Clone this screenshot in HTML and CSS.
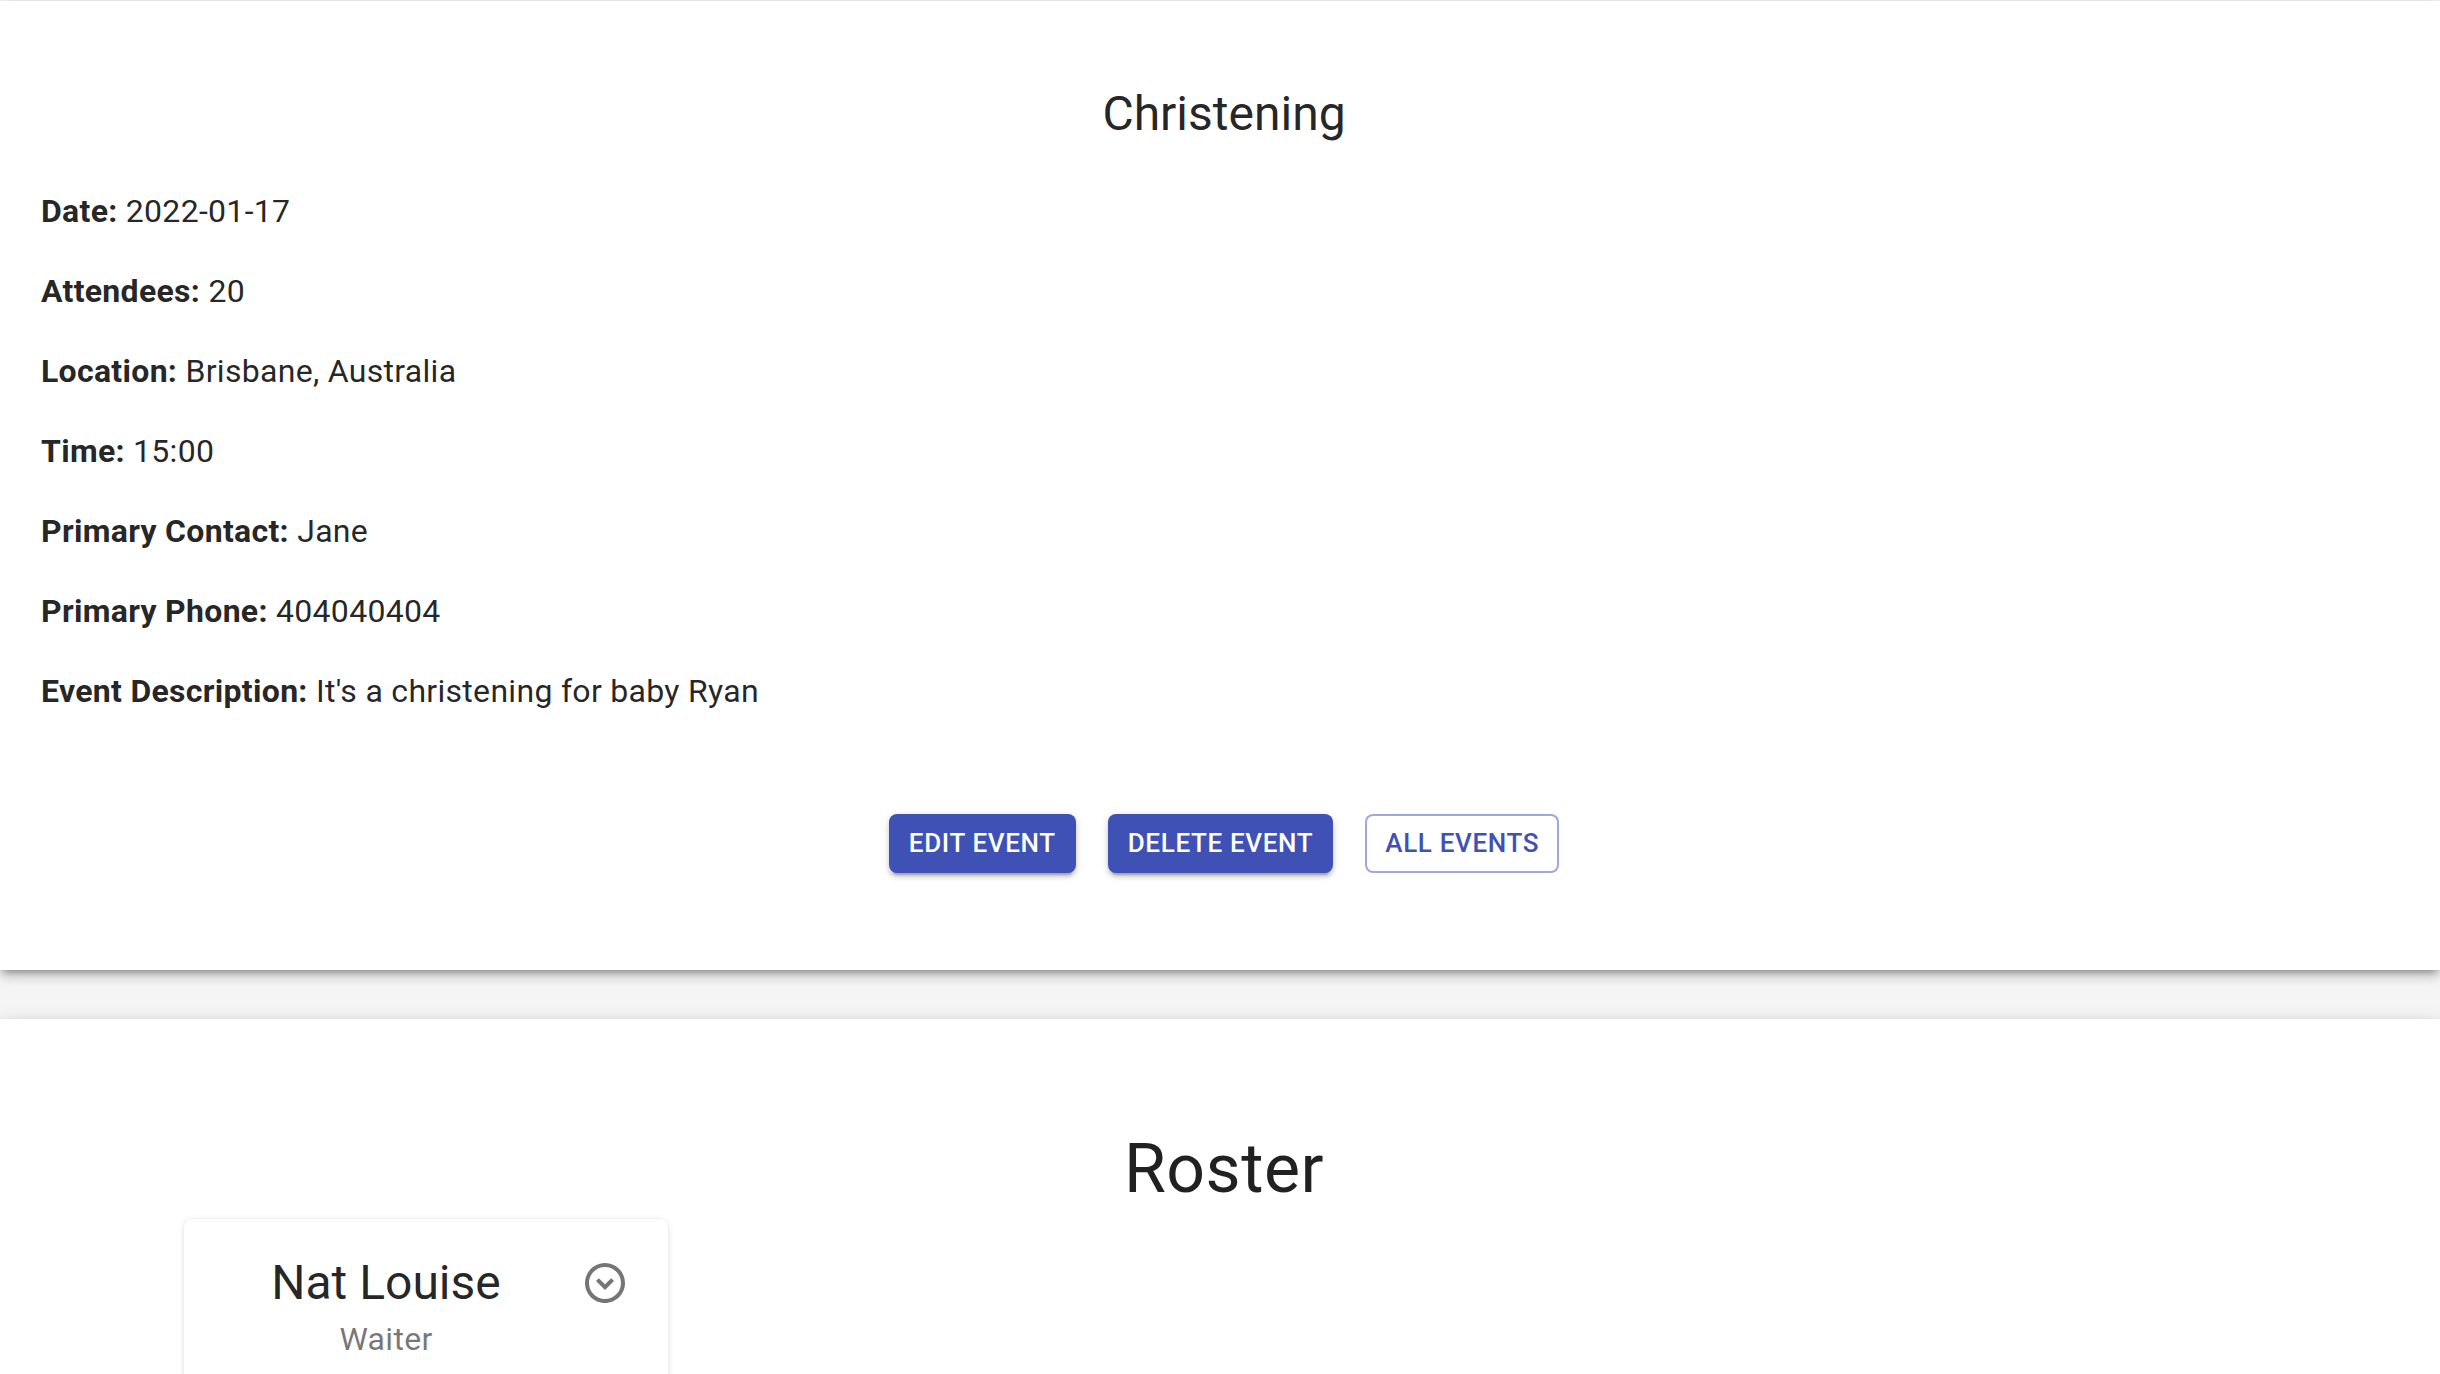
FILE: index.html
```html
<!DOCTYPE html>
<html lang="en">
<head>
<meta charset="utf-8">
<title>Christening</title>
<link rel="stylesheet" href="styles.css">
</head>
<body>
<main class="page">
  <section class="paper event">
    <h1 class="event-title">Christening</h1>
    <div class="details">
      <p class="detail"><b>Date:</b> 2022-01-17</p>
      <p class="detail"><b>Attendees:</b> 20</p>
      <p class="detail"><b>Location:</b> Brisbane, Australia</p>
      <p class="detail"><b>Time:</b> 15:00</p>
      <p class="detail"><b>Primary Contact:</b> Jane</p>
      <p class="detail"><b>Primary Phone:</b> 404040404</p>
      <p class="detail"><b>Event Description:</b> It's a christening for baby Ryan</p>
    </div>
    <div class="actions">
      <button class="btn btn-contained">Edit Event</button>
      <button class="btn btn-contained">Delete Event</button>
      <button class="btn btn-outlined">All Events</button>
    </div>
  </section>
  <section class="paper roster">
    <h2 class="roster-title">Roster</h2>
    <div class="roster-grid">
      <article class="staff-card">
        <div class="staff-header">
          <div class="staff-text">
            <div class="staff-name">Nat Louise</div>
            <div class="staff-role">Waiter</div>
          </div>
          <button class="icon-btn" aria-label="expand">
            <svg viewBox="0 0 24 24" width="48" height="48"><path fill="currentColor" d="M15.08 9.59 12 12.67 8.92 9.59 7.5 11l4.5 4.5 4.5-4.5-1.42-1.41zM12 4c4.41 0 8 3.59 8 8s-3.59 8-8 8-8-3.59-8-8 3.59-8 8-8m0-2C6.48 2 2 6.48 2 12s4.48 10 10 10 10-4.48 10-10S17.52 2 12 2z"/></svg>
          </button>
        </div>
      </article>
    </div>
  </section>
</main>
</body>
</html>
```
FILE: styles.css
```css
html, body {
  margin: 0;
  padding: 0;
}
body {
  background: #f5f5f5;
  font-family: Roboto, "Liberation Sans", Arial, sans-serif;
  color: rgba(0, 0, 0, 0.87);
  overflow: hidden;
}
.page {
  padding-top: 1px;
  display: flex;
  flex-direction: column;
  gap: 49px;
}
.paper {
  background: #fff;
  box-shadow: 0 6px 6px -4px rgba(0,0,0,0.25), 0 6px 10px 0 rgba(0,0,0,0.16), 0 2px 18px 0 rgba(0,0,0,0.12);
}
.event {
  padding: 81px 33px 97px 41px;
}
.event-title {
  margin: 0 0 41px;
  text-align: center;
  font-size: 48px;
  line-height: 64px;
  font-weight: 400;
}
.details {
  display: flex;
  flex-direction: column;
}
.detail {
  margin: 0 0 32px;
  font-size: 32px;
  line-height: 48px;
  font-weight: 400;
  letter-spacing: 0.3px;
}
.detail b {
  font-weight: 700;
}
.actions {
  margin-top: 67px;
  display: flex;
  justify-content: center;
  gap: 32px;
}
.btn {
  font-family: Roboto, "Liberation Sans", Arial, sans-serif;
  font-size: 26px;
  font-weight: 500;
  letter-spacing: 0.65px;
  text-transform: uppercase;
  line-height: 43px;
  padding: 8px 20px;
  border-radius: 8px;
  cursor: pointer;
}
.btn-contained {
  background: #3f51b5;
  color: #fff;
  border: none;
  box-shadow: 0 6px 2px -4px rgba(0,0,0,0.2), 0 4px 4px 0 rgba(0,0,0,0.14), 0 2px 10px 0 rgba(0,0,0,0.12);
}
.btn-outlined {
  background: #fff;
  color: #3f51b5;
  border: 2px solid rgba(63, 81, 181, 0.5);
  padding: 6px 18px;
}
.roster {
  padding: 108px 0 0 8px;
  min-height: 400px;
}
.roster-title {
  margin: 0 0 8px;
  text-align: center;
  font-size: 68px;
  line-height: 84px;
  font-weight: 400;
  letter-spacing: 0.5px;
}
.roster-grid {
  display: flex;
  padding-left: 176px;
}
.staff-card {
  width: 484px;
  background: #fff;
  border-radius: 8px;
  box-shadow: 0 1px 6px rgba(0,0,0,0.12), 0 0 2px rgba(0,0,0,0.06);
}
.staff-header {
  display: flex;
  align-items: flex-start;
  padding: 32px 39px 32px 32px;
}
.staff-text {
  flex: 1;
  text-align: center;
}
.staff-name {
  font-size: 48px;
  line-height: 64px;
  font-weight: 400;
}
.staff-role {
  font-size: 32px;
  line-height: 48px;
  letter-spacing: 0.3px;
  color: rgba(0, 0, 0, 0.54);
}
.icon-btn {
  margin: 8px 0 0 25px;
  width: 48px;
  height: 48px;
  padding: 0;
  border: none;
  background: none;
  color: rgba(0, 0, 0, 0.54);
  display: flex;
}
```
